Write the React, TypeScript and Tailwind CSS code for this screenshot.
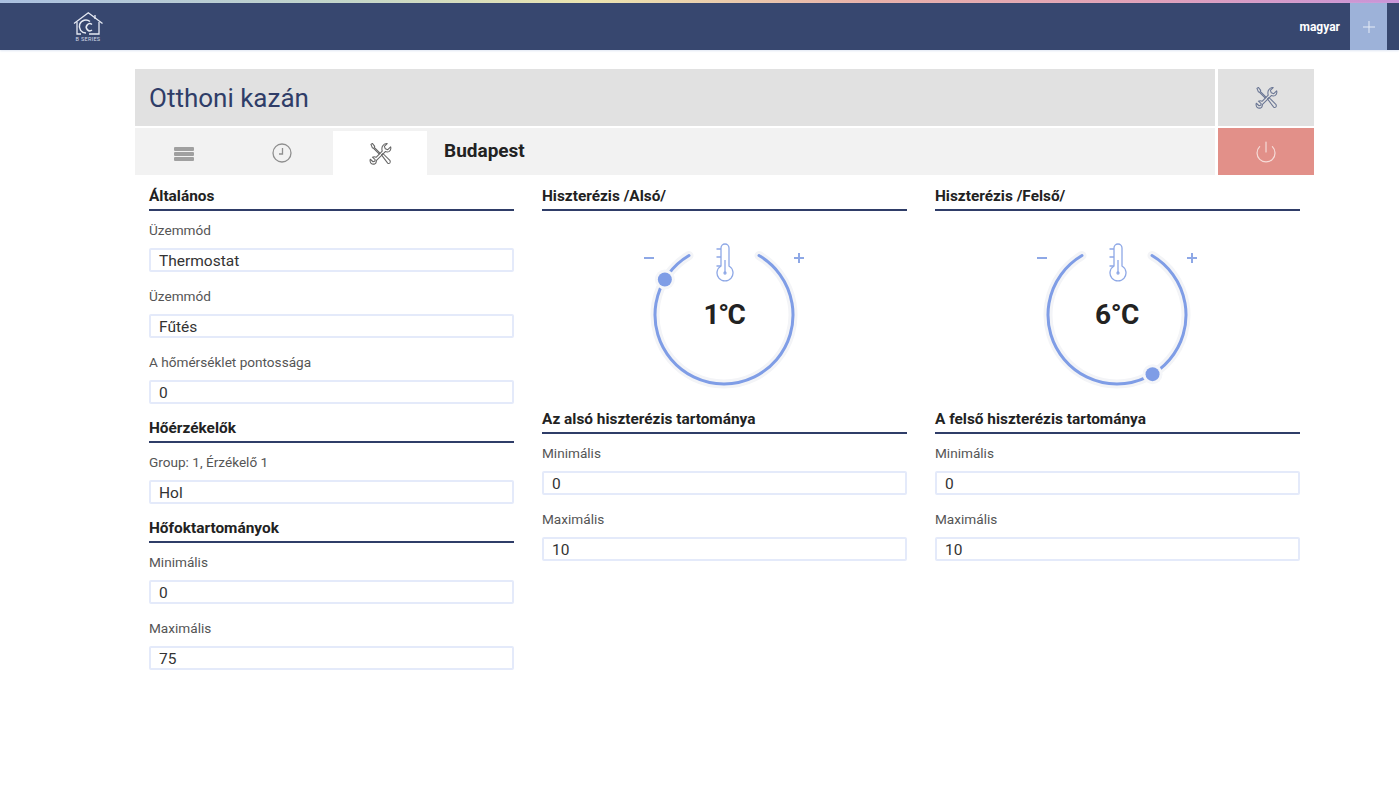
import { Power } from "lucide-react";

const font = "font-['Roboto',sans-serif]";

const ToolsIcon = ({ className }: { className?: string }) => (
  <svg viewBox="0 0 24 24" fill="none" stroke="currentColor" strokeWidth="1.1" strokeLinejoin="round" strokeLinecap="round" className={className}>
    <path d="M2 2.5 L3.5 1.5 L6 4.5 L5.5 5.5 L11.5 11.5 L10.5 12.5 L4.5 6.5 L3.5 6 Z" />
    <path d="M13 13.5 L14.5 12 L22 19.5 Q22.6 21 21.6 22 Q20.5 22.8 19.5 22 Z" />
    <path d="M19 1.6 L16 4.6 L17 7 L19.6 8 L22.6 5 Q23.4 8.2 21.2 9.8 Q19.2 11 17 10 L7.6 19.4 Q8 22 6 22.9 Q3.6 23.6 2 22 Q0.6 20 1.4 18 L4.2 20.6 L6 20.2 L6.4 18.4 L3.6 15.8 Q5.6 15 7.4 16 L13.8 9.4 Q13 7 14 4.4 Q16 1.2 19 1.6 Z" />
  </svg>
);

const ClockIcon = () => (
  <svg viewBox="0 0 20 20" fill="none" stroke="#8f8f8f" strokeWidth="1.3" className="h-5 w-5">
    <circle cx="10" cy="10" r="9" />
    <path d="M10.5 5 V11 H7" />
  </svg>
);

const ListIcon = () => (
  <div className="flex w-5 flex-col gap-[1px]">
    <div className="h-1 rounded-[1px] bg-[#a0a0a0]" />
    <div className="h-1 rounded-[1px] bg-[#a0a0a0]" />
    <div className="h-1 rounded-[1px] bg-[#a0a0a0]" />
  </div>
);

const Logo = () => (
  <div className="flex w-[30px] flex-col items-center">
    <svg viewBox="0 0 30 23" fill="none" stroke="#e6eaf3" strokeWidth="1.3" className="h-[23px] w-[30px]">
      <path d="M1 11.5 L15.3 0.8 L29.5 11.5" />
      <path d="M4 10 V22 H8" />
      <path d="M26 10 V22 H16" />
      <path d="M22 3 V7" />
      <path d="M17 9.5 A6.5 6.5 0 1 0 13 21" strokeWidth="1.5" />
      <path d="M19 12.5 A3.5 3.5 0 1 0 19 18" strokeWidth="1.5" />
    </svg>
    <span className="mt-[1px] whitespace-nowrap text-[5.5px] leading-[6px] tracking-[0.3px] text-[#d5dbe8]">B SERIES</span>
  </div>
);

const SectionTitle = ({ children }: { children: string }) => (
  <h2 className="h-[24px] border-b-2 border-[#2f3d68] text-[15.4px] leading-[18px] font-bold text-[#222]">{children}</h2>
);

const Field = ({ label, value }: { label: string; value: string }) => (
  <div className="mb-[15px]">
    <div className="mb-[9px] text-[13.6px] leading-[18px] text-[#555]">{label}</div>
    <div className="flex h-[24px] items-center rounded-[2px] border-2 border-[#e4eafa] pt-[4px] pl-[8px] text-[15.5px] text-[#333]">{value}</div>
  </div>
);

// knob ring, angle measured clockwise from the top
const Knob = ({ value, angle, tight }: { value: string; angle: number; tight?: boolean }) => {
  const rad = (angle * Math.PI) / 180;
  const dotX = 85 + 69 * Math.sin(rad);
  const dotY = 85 - 69 * Math.cos(rad);
  const arc = "M 120 25.5 A 69 69 0 1 1 50 25.5";
  return (
    <div className="relative mt-[19px] mb-[10px] ml-[97px] h-[170px] w-[170px]">
      <svg viewBox="0 0 170 170" fill="none" className="h-full w-full">
        <path d={arc} stroke="#f3f4f7" strokeWidth="9" strokeLinecap="round" />
        <path d={arc} stroke="#7f9de6" strokeWidth="3" strokeLinecap="round" />
        <circle cx={dotX} cy={dotY} r="10" fill="#f5f6f9" />
        <circle cx={dotX} cy={dotY} r="7" fill="#7f9de6" />
        <path d="M5 28 H15" stroke="#8ea8e6" strokeWidth="2" />
        <path d="M155 28 H165 M160 23 V33" stroke="#8ea8e6" strokeWidth="2" />
        <g stroke="#8ea8e6" strokeWidth="1.3">
          <path d="M82 36 V18 A4 4 0 0 1 90 18 V36 A8 8 0 1 1 82 36 Z" fill="#fff" />
          <path d="M86 30 V43" />
          <circle cx="86" cy="43" r="1" />
          <path d="M77.5 19 H82 M77.5 27 H82 M77.5 36 H82" />
        </g>
      </svg>
      <div className={`absolute inset-0 flex items-center justify-center text-[28px] font-bold text-[#222] ${tight ? "tracking-[-1.5px]" : "tracking-[-0.5px]"}`}>{value}</div>
    </div>
  );
};

const HysteresisColumn = ({ title, value, angle, range, tight }: { title: string; value: string; angle: number; range: string; tight?: boolean }) => (
  <div className="w-[365px]">
    <SectionTitle>{title}</SectionTitle>
    <Knob value={value} angle={angle} tight={tight} />
    <SectionTitle>{range}</SectionTitle>
    <div className="mt-[10px]">
      <Field label="Minimális" value="0" />
      <Field label="Maximális" value="10" />
    </div>
  </div>
);

export default function App() {
  return (
    <div className={`min-h-[787px] bg-white ${font}`}>
      <div className="h-[3px] bg-[linear-gradient(to_right,#a9bfe0,#c3d6c8_25%,#ece5ae_42%,#e8b0a8_62%,#e0a0b8_82%,#c994d8)]" />
      <header className="flex h-[47px] items-stretch justify-between bg-[#37476f] pl-[73px] pr-[12px] shadow-[0_1px_2px_#dfe6f3]">
        <div className="flex items-center">
          <Logo />
        </div>
        <div className="flex items-stretch">
          <div className="flex items-center pr-[10px] text-[12px] font-bold text-white">magyar</div>
          <div className="flex w-[37px] items-center justify-center bg-[#9db2d9]">
            <svg viewBox="0 0 12 12" stroke="#e6ecf7" strokeWidth="1" className="h-3 w-3">
              <path d="M6 0 V12 M0 6 H12" />
            </svg>
          </div>
        </div>
      </header>

      <main className="mx-[135px] w-[1179px] pt-[19px]">
        <div className="flex gap-[3px]">
          <div className="flex h-[57px] flex-1 items-center bg-[#e1e1e1] pt-[2px] pl-[14px] text-[26px] text-[#2f3d68]">Otthoni kazán</div>
          <div className="flex w-[96px] items-center justify-center bg-[#e1e1e1]">
            <ToolsIcon className="h-[23px] w-[23px] text-[#6a7694]" />
          </div>
        </div>
        <div className="mt-[2px] flex gap-[3px]">
          <div className="flex h-[47px] flex-1 items-stretch bg-[#f2f2f2]">
            <div className="flex w-[98px] items-center justify-center pt-[4px]"><ListIcon /></div>
            <div className="flex w-[100px] items-center justify-center pt-[3px] pr-[2px]"><ClockIcon /></div>
            <div className="mt-[3px] flex w-[94px] items-center justify-center bg-white">
              <ToolsIcon className="h-[23px] w-[23px] text-[#666]" />
            </div>
            <div className="flex items-center pl-[17px] text-[19px] font-bold text-[#222]">Budapest</div>
          </div>
          <div className="flex w-[96px] items-center justify-center bg-[#e29089]">
            <Power className="h-[24px] w-[24px] text-[#f6dcd8]" strokeWidth={1.2} />
          </div>
        </div>

        <div className="flex gap-[28px] pl-[14px] pt-[12px]">
          <div className="w-[365px]">
            <SectionTitle>Általános</SectionTitle>
            <div className="mt-[10px]">
              <Field label="Üzemmód" value="Thermostat" />
              <Field label="Üzemmód" value="Fűtés" />
              <Field label="A hőmérséklet pontossága" value="0" />
            </div>
            <SectionTitle>Hőérzékelők</SectionTitle>
            <div className="mt-[10px]">
              <Field label="Group: 1, Érzékelő 1" value="Hol" />
            </div>
            <SectionTitle>Hőfoktartományok</SectionTitle>
            <div className="mt-[10px]">
              <Field label="Minimális" value="0" />
              <Field label="Maximális" value="75" />
            </div>
          </div>
          <HysteresisColumn title="Hiszterézis /Alsó/" value="1°C" angle={-59} range="Az alsó hiszterézis tartománya" tight />
          <HysteresisColumn title="Hiszterézis /Felső/" value="6°C" angle={149} range="A felső hiszterézis tartománya" />
        </div>
      </main>
    </div>
  );
}
